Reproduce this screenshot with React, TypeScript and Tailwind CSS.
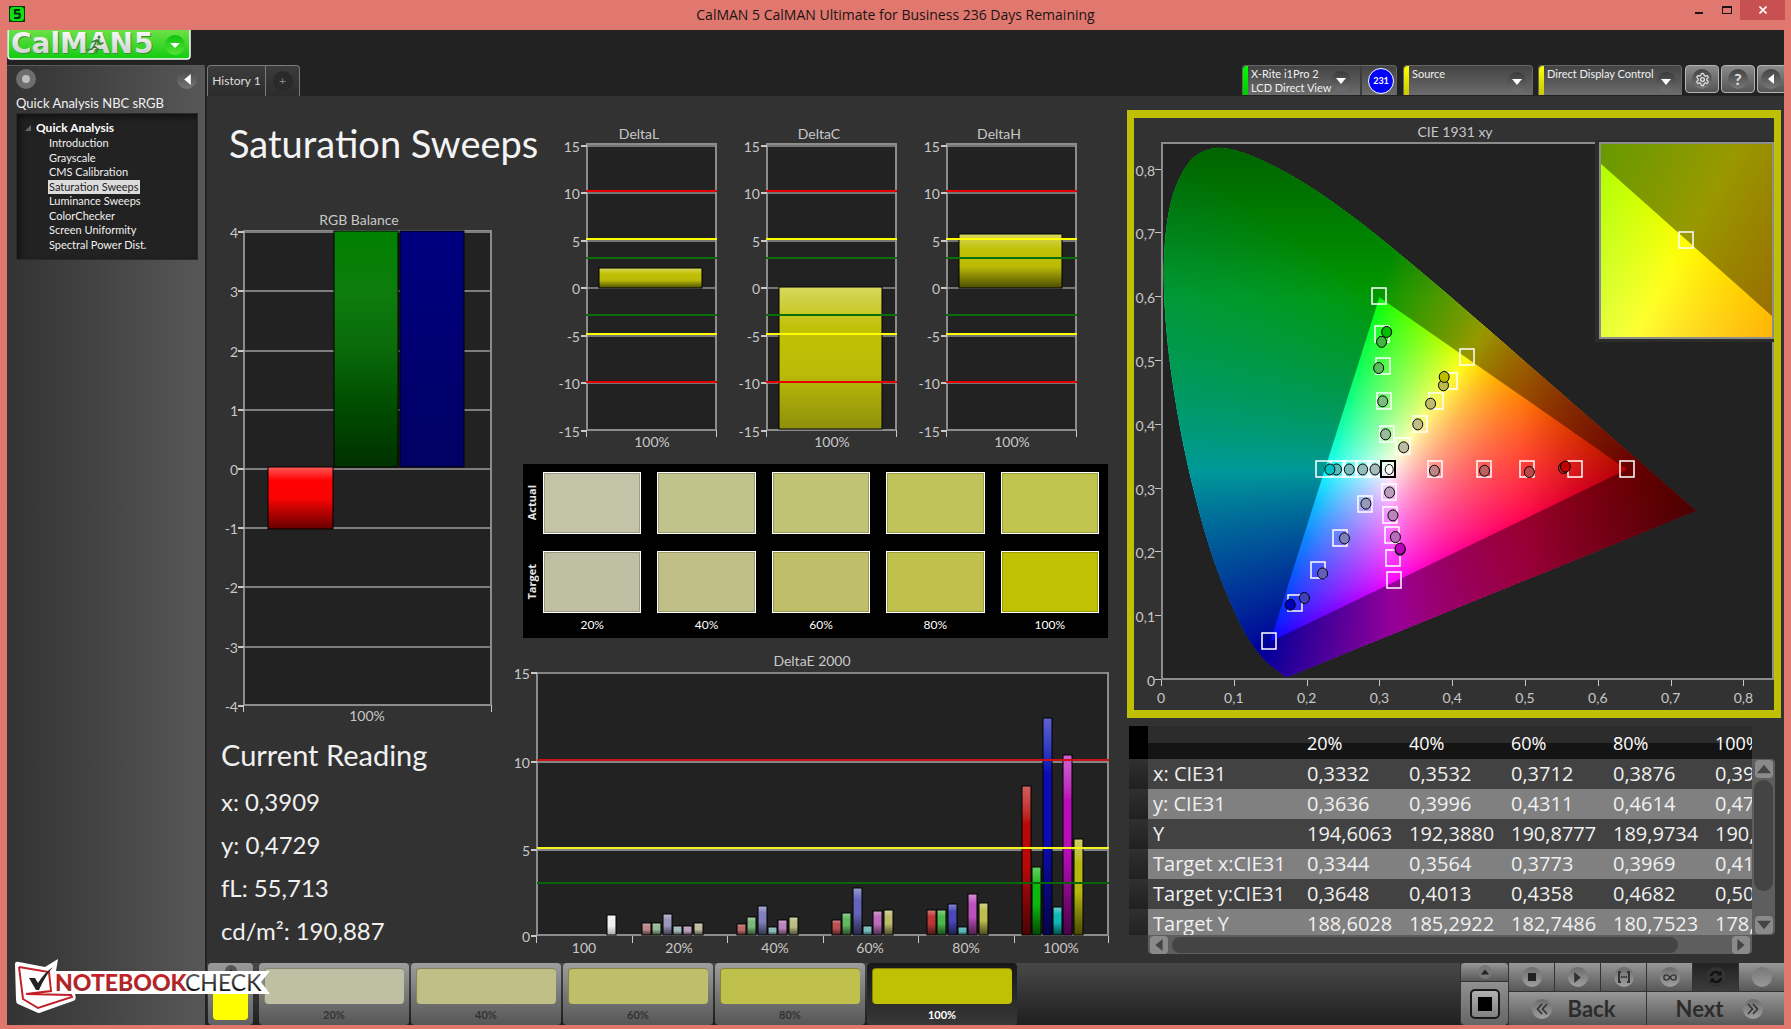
import React from "react";
import { LuSettings } from "react-icons/lu";

/* ---------- chromaticity maths ---------- */

const LOCUS: [number, number][] = [
  [0.1741, 0.005], [0.1714, 0.0051], [0.1644, 0.0109], [0.1566, 0.0177], [0.144, 0.0297],
  [0.1241, 0.0578], [0.1096, 0.0868], [0.0913, 0.1327], [0.0687, 0.2007], [0.0454, 0.295],
  [0.0235, 0.4127], [0.0082, 0.5384], [0.0039, 0.6548], [0.0139, 0.7502], [0.0389, 0.812],
  [0.0743, 0.8338], [0.1142, 0.8262], [0.1547, 0.8059], [0.1929, 0.7816], [0.2296, 0.7543],
  [0.2658, 0.7243], [0.3016, 0.6923], [0.3731, 0.6245], [0.4441, 0.5547], [0.5125, 0.4866],
  [0.5752, 0.4242], [0.627, 0.3725], [0.6658, 0.334], [0.6915, 0.3083], [0.719, 0.2809],
  [0.7347, 0.2653],
];

function xyColor(x: number, y: number): string {
  const z = 1 - x - y;
  const lin = [
    3.2406 * x - 1.5372 * y - 0.4986 * z,
    -0.9689 * x + 1.8758 * y + 0.0415 * z,
    0.0557 * x - 0.204 * y + 1.057 * z,
  ].map((c) => Math.max(0, c));
  const peak = Math.max(lin[0], lin[1], lin[2], 0.0001);
  const red = Math.min(1, Math.max(0.5, 1 - (x - 0.5) * 2.2));
  const green = Math.min(1, Math.max(0.6, 1 - (y - 0.6) * 1.5));
  const rgb = lin.map((c) => Math.round(255 * Math.pow(c / peak, 0.75) * red * green));
  return `rgb(${rgb[0]},${rgb[1]},${rgb[2]})`;
}

type FieldProps = {
  id: string; left: number; top: number; width: number; height: number;
  x0: number; x1: number; y0: number; y1: number; stops: number;
};

/* Colour field painted as thin horizontal gradient strips. */
function ColorField({ id, left, top, width, height, x0, x1, y0, y1, stops }: FieldProps) {
  const step = 2;
  const rows = Array.from({ length: Math.ceil(height / step) }, (_, i) => i);
  return (
    <g>
      <defs>
        {rows.map((r) => {
          const y = y1 - ((r * step + 1) / height) * (y1 - y0);
          return (
            <linearGradient key={r} id={`${id}-${r}`} x1="0" x2="1" y1="0" y2="0">
              {Array.from({ length: stops + 1 }, (_, s) => (
                <stop key={s} offset={s / stops} stopColor={xyColor(x0 + (s / stops) * (x1 - x0), y)} />
              ))}
            </linearGradient>
          );
        })}
      </defs>
      {rows.map((r) => (
        <rect key={r} x={left} y={top + r * step} width={width} height={Math.min(step + 1, height - r * step)} fill={`url(#${id}-${r})`} />
      ))}
    </g>
  );
}

/* ---------- shared chart parts ---------- */

const label = "fill-[#c8c8c8] text-[14px] font-['Lato',sans-serif]";

function shade(id: string, color: string, light = 0.35, dark = 0.6) {
  return (
    <linearGradient key={id} id={id} x1="0" x2="0" y1="0" y2="1">
      <stop offset="0" stopColor={`color-mix(in srgb, ${color}, white ${light * 100}%)`} />
      <stop offset="0.25" stopColor={color} />
      <stop offset="0.55" stopColor={color} />
      <stop offset="1" stopColor={`color-mix(in srgb, ${color}, black ${dark * 100}%)`} />
    </linearGradient>
  );
}

function RgbBalance() {
  const y = (v: number) => Math.round(261 - v * 59.2);
  return (
    <svg viewBox="0 0 308 522" className="w-full" role="img" aria-label="RGB Balance">
      <defs>
        <linearGradient id="rb-r" x1="0" x2="0" y1="0" y2="1">
          <stop offset="0" stopColor="#ff5a5a" /><stop offset="0.22" stopColor="#ff0000" />
          <stop offset="0.5" stopColor="#fc0404" /><stop offset="1" stopColor="#640000" />
        </linearGradient>
        <linearGradient id="rb-g" x1="0" x2="0" y1="0" y2="1">
          <stop offset="0" stopColor="#008000" /><stop offset="0.25" stopColor="#0d7d0d" />
          <stop offset="0.5" stopColor="#0a6a0a" /><stop offset="0.75" stopColor="#004c00" />
          <stop offset="1" stopColor="#003000" />
        </linearGradient>
        <linearGradient id="rb-b" x1="0" x2="0" y1="0" y2="1">
          <stop offset="0" stopColor="#000080" /><stop offset="1" stopColor="#000064" />
        </linearGradient>
      </defs>
      <text x="152" y="17" textAnchor="middle" className={label}>RGB Balance</text>
      <rect x="37" y="23" width="247" height="474" fill="#222" stroke="#8c8c8c" strokeWidth="2" />
      {[4, 3, 2, 1, 0, -1, -2, -3, -4].map((v) => (
        <g key={v}>
          <rect x="31" y={y(v) - 1} width="6" height="2" fill="#c8c8c8" />
          {v > -4 && <rect x="38" y={y(v) - 1} width="245" height="2" fill="#7d7d7d" />}
          <text x="31" y={y(v) + 6} textAnchor="end" className={label}>{v}</text>
        </g>
      ))}
      <rect x="61" y="259" width="65" height="62" fill="url(#rb-r)" stroke="#000" />
      <rect x="127" y="23" width="64" height="236" fill="url(#rb-g)" stroke="#000" />
      <rect x="193" y="23" width="64" height="236" fill="url(#rb-b)" stroke="#000" />
      <rect x="36" y="497" width="1" height="7" fill="#c8c8c8" />
      <rect x="284" y="497" width="1" height="7" fill="#c8c8c8" />
      <text x="160" y="513" textAnchor="middle" className={label}>100%</text>
    </svg>
  );
}

function DeltaChart({ name, top, bottom }: { name: string; top: number; bottom: number }) {
  const y = (v: number) => 163 - v * 9.5;
  const limits: [number, string][] = [[10.2, "#e60000"], [5.2, "#ffff00"], [3.2, "#0a6e0a"], [-2.8, "#0a6e0a"], [-4.8, "#ffff00"], [-9.9, "#e60000"]];
  return (
    <svg viewBox="0 0 180 330" className="w-full" role="img" aria-label={name}>
      <defs>
        <linearGradient id={`bar-${name}`} x1="0" x2="0" y1="0" y2="1">
          <stop offset="0" stopColor="#d7d75f" /><stop offset="0.3" stopColor="#c0c004" />
          <stop offset="0.6" stopColor="#bcbc08" />
          <stop offset="1" stopColor={bottom > 300 ? "#8f8f0c" : "#4b4b00"} />
        </linearGradient>
      </defs>
      <text x="94" y="14" textAnchor="middle" className={label}>{name}</text>
      <rect x="42" y="19" width="129" height="286" fill="#222" stroke="#8c8c8c" strokeWidth="2" />
      {[15, 10, 5, 0, -5, -10, -15].map((v) => (
        <g key={v}>
          <rect x="36" y={Math.round(y(v)) - 1} width="6" height="2" fill="#c8c8c8" />
          {v > -15 && <rect x="43" y={Math.round(y(v)) - 1} width="127" height="2" fill="#757575" />}
          <text x="35" y={y(v) + 6} textAnchor="end" className={label}>{v}</text>
        </g>
      ))}
      <rect x="54" y={top} width="103" height={bottom - top} fill={`url(#bar-${name})`} stroke="#000" />
      {limits.map(([v, c]) => (
        <rect key={v} x="41" y={Math.round(y(v)) - 1} width="131" height="2" fill={c} />
      ))}
      <rect x="41" y="305" width="1" height="7" fill="#c8c8c8" />
      <rect x="171" y="305" width="1" height="7" fill="#c8c8c8" />
      <text x="107" y="322" textAnchor="middle" className={label}>100%</text>
    </svg>
  );
}

const E_GROUPS: { name: string; bars: [number, string][] }[] = [
  { name: "20%", bars: [[272, "#bc8888"], [272, "#96b896"], [263, "#9898bc"], [275, "#a2baba"], [275, "#bca0bc"], [272, "#bcbc9c"]] },
  { name: "40%", bars: [[273, "#bc6a6a"], [266, "#7ab87a"], [255, "#8080bc"], [276, "#8cb8b8"], [269, "#bc84bc"], [266, "#bcbc84"]] },
  { name: "60%", bars: [[269, "#bc5050"], [262, "#60b860"], [237, "#6464b8"], [275, "#78bcbc"], [260, "#bc6cbc"], [259, "#bcbc6c"]] },
  { name: "80%", bars: [[259, "#bc3838"], [259, "#48b848"], [253, "#4848b8"], [276, "#5cb8b8"], [243, "#bc50bc"], [252, "#bcbc50"]] },
  { name: "100%", bars: [[135, "#b80808"], [216, "#0cb80c"], [67, "#0c0cb4"], [256, "#0cb8b8"], [104, "#b80cb8"], [188, "#b8b80c"]] },
];

function DeltaE() {
  return (
    <svg viewBox="0 0 605 307" className="w-full" role="img" aria-label="DeltaE 2000">
      <defs>
        {E_GROUPS.flatMap((g, gi) => g.bars.map(([, c], bi) => shade(`e-${gi}-${bi}`, c)))}
        {shade("e-white", "#f0f0f0", 0.3, 0.3)}
      </defs>
      <text x="297" y="16" textAnchor="middle" className={label}>DeltaE 2000</text>
      <rect x="22" y="23" width="571" height="262" fill="#222" stroke="#8c8c8c" strokeWidth="2" />
      {[[15, 22], [10, 111], [5, 199], [0, 285]].map(([v, y]) => (
        <g key={v}>
          <rect x="16" y={y} width="6" height="2" fill="#c8c8c8" />
          {v > 0 && <rect x="23" y={y} width="569" height="2" fill="#858585" />}
          <text x="15" y={y + 7} textAnchor="end" className={label}>{v}</text>
        </g>
      ))}
      <rect x="92" y="265" width="9" height="20" fill="url(#e-white)" stroke="#000" />
      {E_GROUPS.map((g, gi) =>
        g.bars.map(([top], bi) => (
          <rect key={`${gi}-${bi}`} x={127 + gi * 95 + Math.round(bi * 10.3)} y={top + 1} width="9" height={284 - top} fill={`url(#e-${gi}-${bi})`} stroke="#000" />
        )),
      )}
      <rect x="22" y="109" width="572" height="2" fill="#d01010" />
      <rect x="22" y="197" width="572" height="2" fill="#f4f41e" />
      <rect x="22" y="232" width="572" height="2" fill="#0a640a" />
      {[21, 117, 212, 308, 403, 499, 593].map((x) => (
        <rect key={x} x={x} y="286" width="1" height="7" fill="#c8c8c8" />
      ))}
      {["100", "20%", "40%", "60%", "80%", "100%"].map((t, i) => (
        <text key={t} x={69 + Math.round(i * 95.4)} y="303" textAnchor="middle" className={label}>{t}</text>
      ))}
    </svg>
  );
}

const TARGETS: [number, number][] = [
  [0.3, 0.602], [0.303, 0.543], [0.305, 0.4917], [0.306, 0.4368], [0.31, 0.385],
  [0.4197, 0.507], [0.397, 0.4687], [0.3773, 0.4368], [0.356, 0.402], [0.333, 0.366],
  [0.222, 0.33], [0.243, 0.33], [0.26, 0.33], [0.277, 0.33], [0.294, 0.33],
  [0.376, 0.33], [0.444, 0.33], [0.503, 0.33], [0.568, 0.33], [0.64, 0.33],
  [0.3127, 0.294], [0.315, 0.258], [0.3168, 0.2268], [0.3186, 0.192], [0.3203, 0.156],
  [0.28, 0.2764], [0.2463, 0.222], [0.2163, 0.172], [0.1846, 0.12], [0.149, 0.0606],
];

const READINGS: [number, number, string][] = [
  [0.303, 0.53, "#40b840"], [0.31, 0.5455, "#00be00"], [0.299, 0.489, "#5cbc5c"], [0.3045, 0.4368, "#7cbc7c"], [0.3085, 0.385, "#9abc9a"],
  [0.388, 0.4619, "#bcbc4c"], [0.389, 0.475, "#bebe00"], [0.3703, 0.4331, "#bcbc6a"], [0.3527, 0.4007, "#bebe86"], [0.3333, 0.3647, "#bcbca0"],
  [0.241, 0.33, "#56bcbc"], [0.232, 0.33, "#00c4c4"], [0.2586, 0.33, "#78bcbc"], [0.277, 0.33, "#90bcbc"], [0.294, 0.33, "#a4bcbc"],
  [0.3756, 0.328, "#bc8686"], [0.4444, 0.328, "#bc6060"], [0.506, 0.326, "#bc4848"], [0.553, 0.3323, "#bc3030"], [0.5555, 0.3344, "#c00000"],
  [0.314, 0.294, "#bc9cbc"], [0.3186, 0.258, "#bc84bc"], [0.322, 0.224, "#bc6cbc"], [0.3285, 0.204, "#bc48bc"], [0.3285, 0.206, "#be00be"],
  [0.2815, 0.2764, "#9898bc"], [0.252, 0.222, "#8080bc"], [0.222, 0.167, "#6060bc"], [0.197, 0.1285, "#4040bc"], [0.1775, 0.118, "#0000b4"],
];

function CieChart() {
  const px = (x: number) => 27 + x * 728;
  const py = (y: number) => 562 - y * 638;
  const n = LOCUS.length;
  const locus =
    `M${px(LOCUS[0][0])} ${py(LOCUS[0][1])}` +
    LOCUS.slice(0, n - 1)
      .map((p1, i) => {
        const p0 = LOCUS[Math.max(0, i - 1)];
        const p2 = LOCUS[i + 1];
        const p3 = LOCUS[Math.min(n - 1, i + 2)];
        return `C${px(p1[0] + (p2[0] - p0[0]) / 6)} ${py(p1[1] + (p2[1] - p0[1]) / 6)} ${px(p2[0] - (p3[0] - p1[0]) / 6)} ${py(p2[1] - (p3[1] - p1[1]) / 6)} ${px(p2[0])} ${py(p2[1])}`;
      })
      .join("") +
    "Z";
  const triangle = `M${px(0.3)} ${py(0.6)}L${px(0.64)} ${py(0.33)}L${px(0.15)} ${py(0.06)}Z`;
  return (
    <svg viewBox="0 0 640 592" className="block w-full" role="img" aria-label="CIE 1931 xy chromaticity diagram">
      <defs>
        <clipPath id="locus-clip"><path d={locus} /></clipPath>
      </defs>
      <text x="321" y="19" textAnchor="middle" className={label}>CIE 1931 xy</text>
      <rect x="28" y="25" width="611" height="536" fill="#222" stroke="#8c8c8c" strokeWidth="2" />
      <g clipPath="url(#locus-clip)">
        <ColorField id="cie" left={27} top={26} width={546} height={536} x0={0} x1={0.75} y0={0} y1={0.84} stops={50} />
        <path d={locus + triangle} fillRule="evenodd" fill="#000" fillOpacity="0.4" />
      </g>
      {TARGETS.map(([x, y], i) => (
        <rect key={i} x={Math.round(px(x)) - 7} y={Math.round(py(y)) - 8} width="14" height="16" fill="none" stroke="#fff" strokeWidth="1.5" />
      ))}
      <rect x={Math.round(px(0.3115)) - 7} y={Math.round(py(0.33)) - 8} width="14" height="16" fill="none" stroke="#000" strokeWidth="2" />
      <ellipse cx={px(0.3135)} cy={py(0.33)} rx="4" ry="5" fill="#fff" stroke="#000" />
      {READINGS.map(([x, y, c], i) => (
        <ellipse key={i} cx={px(x)} cy={py(y)} rx="5" ry="5.5" fill={c} stroke="#000" />
      ))}
      <rect x="461" y="22" width="179" height="202" fill="#2c2c2c" />
      <ColorField id="inset" left={466} top={25} width={173} height={195} x0={0.3843} x1={0.4543} y0={0.4703} y1={0.5403} stops={12} />
      <path d="M466 45V25H639V199Z" fill="#000" fillOpacity="0.4" />
      <rect x="466" y="25" width="173" height="195" fill="none" stroke="#8c8c8c" strokeWidth="2" />
      <rect x="545" y="114" width="14" height="16" fill="none" stroke="#fff" strokeWidth="1.5" />
      {[0, 1, 2, 3, 4, 5, 6, 7, 8].map((v) => (
        <g key={v}>
          <rect x="21" y={Math.round(py(v / 10)) - 1} width="6" height="1" fill="#c8c8c8" />
          <text x="21" y={py(v / 10) + 6} textAnchor="end" className={label}>{v ? `0,${v}` : "0"}</text>
          <rect x={Math.round(px(v / 10))} y="562" width="1" height="6" fill="#c8c8c8" />
          <text x={px(v / 10)} y="585" textAnchor="middle" className={label}>{v ? `0,${v}` : "0"}</text>
        </g>
      ))}
    </svg>
  );
}

/* ---------- small controls ---------- */

function Triangle({ dir, className }: { dir: "up" | "down" | "left" | "right"; className: string }) {
  const d = { up: "M0 8L5 2L10 8Z", down: "M0 2L5 8L10 2Z", left: "M8 0L2 5L8 10Z", right: "M2 0L8 5L2 10Z" }[dir];
  return <svg viewBox="0 0 10 10" className={className} aria-hidden="true"><path d={d} fill="currentColor" /></svg>;
}

function DropDisc() {
  return (
    <span className="pointer-events-none flex size-5 shrink-0 items-center justify-center rounded-full bg-linear-to-b from-[#3a3a3a] to-[#707070] text-white">
      <Triangle dir="down" className="size-[10px]" />
    </span>
  );
}

function Picker({ name, width }: { name: string; width: string }) {
  return (
    <label className={`relative flex h-[30px] ${width} items-center rounded-t border border-b-0 border-[#666] bg-linear-to-b from-[#444] to-[#6c6c6c]`}>
      <span className="absolute inset-y-0 left-0 w-[5px] rounded-tl bg-linear-to-b from-[#ffff00] to-[#c8c800]" />
      <select aria-label={name} className="h-full w-full appearance-none bg-transparent pb-[14px] pl-2 text-[11px] leading-4 text-[#f0f0f0]">
        <option>{name}</option>
      </select>
      <span className="absolute right-[5px] top-[6px]"><DropDisc /></span>
    </label>
  );
}

const squareButton = "flex h-7 w-[34px] shrink-0 items-center justify-center rounded border border-[#b4b4b4] bg-linear-to-b from-[#8a8a8a] to-[#555]";
const disc = "flex size-5 items-center justify-center rounded-full bg-linear-to-b from-[#444] to-[#777] text-[#e6e6e6]";

function Toolbar() {
  return (
    <div className="flex h-[31px] items-start bg-[#222]">
      <div role="tablist" className="flex h-[31px] w-[93px] overflow-hidden rounded-t border border-b-0 border-[#7a7a7a] bg-linear-to-b from-[#3c3c3c] to-[#2c2c2c]">
        <button role="tab" aria-selected="true" className="w-[58px] whitespace-nowrap border-r border-[#7a7a7a] text-[12px] text-[#dcdcdc]">History 1</button>
        <button aria-label="Add history" className="flex flex-1 items-center justify-center">
          <span className="flex size-5 items-center justify-center rounded-full bg-[#2a2a2a] text-[12px] text-[#888]">+</span>
        </button>
      </div>
      <div className="ml-auto flex items-start overflow-hidden">
        <div className="relative mr-[6px] flex h-[30px] w-[155px] rounded-t border border-b-0 border-[#666] bg-linear-to-b from-[#444] to-[#6c6c6c]">
          <span className="w-[5px] rounded-tl bg-linear-to-b from-[#00ff00] to-[#00c800]" />
          <button aria-haspopup="menu" className="flex w-[114px] items-center justify-between border-r-2 border-[#3c3c3c] pr-[9px] pl-[3px] text-left text-[11px] leading-[14px] text-[#f0f0f0]">
            <span className="whitespace-nowrap">X-Rite i1Pro 2<br />LCD Direct View</span>
            <DropDisc />
          </button>
          <button className="m-[2px] ml-[6px] flex size-[26px] items-center justify-center rounded-full border border-white bg-[#0000ff] text-[9px] font-bold text-white">231</button>
        </div>
        <div className="mr-[5px]"><Picker name="Source" width="w-[130px]" /></div>
        <div className="mr-[3px]"><Picker name="Direct Display Control" width="w-[144px]" /></div>
        <button aria-label="Settings" className={squareButton}><span className={disc}><LuSettings size={15} /></span></button>
        <button aria-label="Help" className={`${squareButton} ml-[2px]`}><span className={`${disc} text-[16px] font-bold`}>?</span></button>
        <button aria-label="Collapse" className="ml-[2px] flex h-7 w-[27px] items-center justify-center rounded-l border border-r-0 border-[#b4b4b4] bg-linear-to-b from-[#8a8a8a] to-[#555]">
          <span className={disc}><Triangle dir="left" className="size-[10px] text-white" /></span>
        </button>
      </div>
    </div>
  );
}

const STEPS = ["Introduction", "Grayscale", "CMS Calibration", "Saturation Sweeps", "Luminance Sweeps", "ColorChecker", "Screen Uniformity", "Spectral Power Dist."];

function Sidebar() {
  return (
    <aside className="w-[200px] shrink-0 rounded-tr border-t border-r-2 border-[#222] border-t-[#5a5a5a] bg-linear-to-r from-[#333] to-[#575757] pt-[3px] pr-2 pl-[9px]">
      <div className="flex items-center justify-between">
        <button aria-label="Options" className="flex size-5 items-center justify-center rounded-full bg-[#6e6e6e]"><span className="size-2 rounded-full bg-[#bebebe]" /></button>
        <button aria-label="Hide panel" className="flex size-5 items-center justify-center rounded-full bg-linear-to-b from-[#4a4a4a] to-[#757575] text-white"><Triangle dir="left" className="size-[11px]" /></button>
      </div>
      <h2 className="mt-[6px] text-[13px] leading-4 text-[#f0f0f0]">Quick Analysis NBC sRGB</h2>
      <nav className="mt-[2px] h-[147px] w-[182px] border border-[#2a2a2a] bg-[#222] pt-[5px] shadow-[inset_3px_3px_6px_#111]">
        <div className="flex h-[17px] items-center gap-[5px] pl-2 text-[12px] font-bold text-white">
          <svg viewBox="0 0 6 6" className="size-[6px]" aria-hidden="true"><path d="M6 0V6H0Z" fill="#666" /></svg>
          Quick Analysis
        </div>
        <ul className="grid h-[116px] grid-rows-8 pl-[31px] text-[11px] leading-[14px] text-[#f0f0f0]">
          {STEPS.map((s) => (
            <li key={s} className="flex items-center">
              <a href="#" className={s === "Saturation Sweeps" ? "bg-[#dcdcdc] px-px text-[#222]" : "px-px"}>{s}</a>
            </li>
          ))}
        </ul>
      </nav>
    </aside>
  );
}

const ACTUAL = ["bg-[#c3c3a8]", "bg-[#c0c38c]", "bg-[#c0c373]", "bg-[#c0c35a]", "bg-[#bfc54e]"];
const TARGET = ["bg-[#bfbfa4]", "bg-[#c0bf88]", "bg-[#bfbf6a]", "bg-[#c0c04c]", "bg-[#c0c004]"];
const LEVELS = ["20%", "40%", "60%", "80%", "100%"];

function SwatchRow({ name, colors }: { name: string; colors: string[] }) {
  return (
    <div className="flex h-[62px]">
      <div className="flex w-5 shrink-0 items-center justify-center pr-1">
        <span className="rotate-180 text-[11px] font-bold leading-none text-[#e6e6e6] [writing-mode:vertical-rl] font-['Open_Sans',sans-serif]">{name}</span>
      </div>
      <div className="grid flex-1 grid-cols-5 gap-4">
        {colors.map((c) => <div key={c} className={`border border-white shadow-[inset_0_0_0_1px_#00000030] ${c}`} />)}
      </div>
    </div>
  );
}

function Swatches() {
  return (
    <section className="mr-3 ml-2 bg-black pt-2 pr-[9px] pb-[5px]">
      <SwatchRow name="Actual" colors={ACTUAL} />
      <div className="h-[17px]" />
      <SwatchRow name="Target" colors={TARGET} />
      <div className="grid grid-cols-5 gap-4 pt-[3px] pl-5 text-center text-[12px] leading-[17px] text-white">
        {LEVELS.map((l) => <span key={l}>{l}</span>)}
      </div>
    </section>
  );
}

const ROWS = [
  ["x: CIE31", "0,3332", "0,3532", "0,3712", "0,3876", "0,3909"],
  ["y: CIE31", "0,3636", "0,3996", "0,4311", "0,4614", "0,4729"],
  ["Y", "194,6063", "192,3880", "190,8777", "189,9734", "190,8870"],
  ["Target x:CIE31", "0,3344", "0,3564", "0,3773", "0,3969", "0,4193"],
  ["Target y:CIE31", "0,3648", "0,4013", "0,4358", "0,4682", "0,5053"],
  ["Target Y", "188,6028", "185,2922", "182,7486", "180,7523", "178,9120"],
];

const scrollButton = "flex size-[18px] shrink-0 items-center justify-center rounded bg-[#8a8a8a] text-[#444]";

function DataTable() {
  return (
    <section className="mt-2 mr-[9px] ml-[9px]">
      <div className="flex">
        <div className="h-[209px] min-w-0 flex-1 overflow-hidden">
          <table className="w-[685px] table-fixed border-collapse text-left text-[20px] leading-[30px] text-[#f0f0f0] font-['Open_Sans',sans-serif]">
            <colgroup>
              <col className="w-[19px]" /><col className="w-[156px]" />
              {LEVELS.map((l) => <col key={l} className="w-[102px]" />)}
            </colgroup>
            <thead>
              <tr className="h-[33px] bg-linear-to-b from-[#2c2c2c] from-50% to-[#141414] to-50% text-[18px] text-white">
                <td className="bg-black" /><td />
                {LEVELS.map((l) => <th key={l} scope="col" className="pl-[3px] font-normal">{l}</th>)}
              </tr>
            </thead>
            <tbody>
              {ROWS.map((r) => (
                <tr key={r[0]} className="h-[30px] odd:bg-[#424242] even:bg-[#808080]">
                  <td className="bg-linear-to-b from-[#303030] to-[#202020]" />
                  <th scope="row" className="whitespace-nowrap pl-[5px] font-normal">{r[0]}</th>
                  {r.slice(1).map((v, i) => <td key={i} className="pl-[3px]">{v}</td>)}
                </tr>
              ))}
            </tbody>
          </table>
        </div>
        <div className="mt-[33px] flex w-[23px] flex-col items-center justify-between rounded-r bg-[#5e5e5e] py-[1px]">
          <button aria-label="Scroll up" className={scrollButton}><Triangle dir="up" className="size-[14px]" /></button>
          <div className="mb-[25px] mt-[2px] w-[19px] flex-1 rounded-full bg-[#444]" />
          <button aria-label="Scroll down" className={scrollButton}><Triangle dir="down" className="size-[14px]" /></button>
        </div>
      </div>
      <div className="mr-[23px] ml-[19px] flex h-[19px] items-center rounded-b bg-[#5e5e5e] px-[2px]">
        <button aria-label="Scroll left" className={scrollButton}><Triangle dir="left" className="size-3" /></button>
        <div className="mr-[54px] ml-1 h-4 flex-1 rounded-full bg-[#444]" />
        <button aria-label="Scroll right" className={scrollButton}><Triangle dir="right" className="size-3" /></button>
      </div>
    </section>
  );
}

const grayButton = "flex items-center justify-center bg-linear-to-b from-[#989898] to-[#585858]";
const roundSpot = "flex size-5 items-center justify-center rounded-full bg-linear-to-b from-[#6c6c6c] to-[#a0a0a0] text-[#333]";

function Footer() {
  return (
    <footer className="flex h-[62px] items-stretch bg-linear-to-b from-[#484848] to-[#202020]">
      <div className="ml-px flex w-[45px] shrink-0 flex-col items-center rounded bg-linear-to-b from-[#9a9a9a] to-[#606060] pb-[5px]">
        <span className="mt-[2px] flex size-3 items-center justify-center rounded-full bg-[#555] text-[#222]"><Triangle dir="up" className="size-[6px]" /></span>
        <span className="mt-[5px] w-[35px] flex-1 rounded-sm bg-[#ffff00]" />
      </div>
      <div className="ml-[6px] flex gap-[2px]">
        {LEVELS.map((l, i) => (
          <button
            key={l}
            className={
              i === 4
                ? "flex w-[150px] flex-col rounded bg-linear-to-b from-[#181818] to-[#383838] px-[5px] pt-[5px] text-[11px] font-bold text-white"
                : "flex w-[150px] flex-col rounded bg-linear-to-b from-[#9e9e9e] to-[#565656] px-[5px] pt-[5px] text-[11px] font-bold text-[#333]"
            }
          >
            <span className={`h-9 w-full rounded border-t border-l border-black/30 ${TARGET[i]}`} />
            <span className="w-full pt-[3px] text-center leading-4">{l}</span>
          </button>
        ))}
      </div>
      <div className="ml-auto flex w-[49px] shrink-0 flex-col border-x border-[#333]">
        <button aria-label="More" className={`${grayButton} h-[19px] rounded-t border-b border-[#333]`}><span className="flex size-[14px] items-center justify-center rounded-full bg-[#777] text-[#222]"><Triangle dir="up" className="size-2" /></span></button>
        <button aria-label="Stop pattern" className="flex flex-1 items-center justify-center rounded-b bg-linear-to-b from-[#909090] to-[#666]">
          <span className="flex size-[30px] items-center justify-center rounded-[5px] border-2 border-[#181818] bg-linear-to-b from-[#b0b0b0] to-[#808080]"><span className="size-[14px] bg-black" /></span>
        </button>
      </div>
      <div className="flex w-[275px] shrink-0 flex-col gap-px bg-[#333]">
        <div className="grid h-[30px] grid-cols-6 gap-px">
          <button aria-label="Stop" className={grayButton}><span className={roundSpot}><span className="size-2 bg-[#222]" /></span></button>
          <button aria-label="Play" className={grayButton}><span className={roundSpot}><Triangle dir="right" className="size-[11px]" /></span></button>
          <button aria-label="Read series" className={grayButton}>
            <span className={roundSpot}>
              <svg viewBox="0 0 14 12" className="h-3 w-[14px]" fill="none" stroke="currentColor" strokeWidth="2" aria-hidden="true"><path d="M4 1H2V11H4M10 1H12V11H10M4 6H5.5M6.3 6H7.8M8.6 6H10" /></svg>
            </span>
          </button>
          <button aria-label="Continuous" className={grayButton}>
            <span className={roundSpot}>
              <svg viewBox="0 0 16 8" className="h-[7px] w-[14px]" fill="none" stroke="currentColor" strokeWidth="1.6" aria-hidden="true"><path d="M8 4C6 1 5 1 4 1A3 3 0 0 0 4 7C5 7 6 7 8 4C10 1 11 1 12 1A3 3 0 0 1 12 7C11 7 10 7 8 4Z" /></svg>
            </span>
          </button>
          <button aria-label="Refresh" className="flex items-center justify-center bg-linear-to-b from-[#222] to-[#3c3c3c]">
            <span className="flex size-5 items-center justify-center rounded-full bg-[#333] text-[#111]">
              <svg viewBox="0 0 14 14" className="size-[14px]" fill="none" stroke="currentColor" strokeWidth="2.4" aria-hidden="true"><path d="M2 6A5 5 0 0 1 10.5 3.5M12 8A5 5 0 0 1 3.5 10.5" /><path d="M12.5 0.5V5.5H8ZM1.5 13.5V8.5H6Z" fill="currentColor" stroke="none" /></svg>
            </span>
          </button>
          <button aria-label="Record" className={grayButton}><span className="size-5 rounded-full bg-linear-to-b from-[#777] to-[#999]" /></button>
        </div>
        <div className="grid flex-1 grid-cols-2 gap-px text-[22px] font-bold text-[#2c2c2c]">
          <button className={`${grayButton} gap-4 pr-2`}>
            <span className={roundSpot}><svg viewBox="0 0 12 12" className="size-3" fill="none" stroke="currentColor" strokeWidth="1.6" aria-hidden="true"><path d="M6 1L1.5 6L6 11M11 1L6.5 6L11 11" /></svg></span>
            Back
          </button>
          <button className={`${grayButton} gap-5 pl-2`}>
            Next
            <span className={roundSpot}><svg viewBox="0 0 12 12" className="size-3" fill="none" stroke="currentColor" strokeWidth="1.6" aria-hidden="true"><path d="M1 1L5.5 6L1 11M6 1L10.5 6L6 11" /></svg></span>
          </button>
        </div>
      </div>
    </footer>
  );
}

function CalmanLogo() {
  return (
    <button aria-label="CalMAN 5 menu" className="h-[31px] w-[184px]">
      <svg viewBox="0 0 184 31" className="h-full w-full overflow-visible" aria-hidden="true">
        <defs>
          <linearGradient id="lg" x1="0" x2="0" y1="0" y2="1"><stop offset="0" stopColor="#6ee048" /><stop offset="1" stopColor="#10cc10" /></linearGradient>
          <linearGradient id="lt" x1="0" x2="0" y1="0" y2="1"><stop offset="0" stopColor="#fff" /><stop offset="1" stopColor="#c4c8c4" /></linearGradient>
          <linearGradient id="ld" x1="0" x2="0" y1="0" y2="1"><stop offset="0" stopColor="#0cc40c" /><stop offset="1" stopColor="#58e038" /></linearGradient>
        </defs>
        <path d="M1 0H183V26Q183 29 180 29H4Q1 29 1 26Z" fill="url(#lg)" />
        <path d="M183 0V26Q183 29 180 29H4Q1 29 1 26V0" fill="none" stroke="#fff" strokeWidth="1.5" />
        <g className="text-[28px] font-bold font-['DejaVu_Sans',sans-serif]">
          <text x="5" y="24" fill="#3c8c3c">CalMAN</text><text x="128" y="24" fill="#3c8c3c">5</text>
          <text x="4" y="23" fill="url(#lt)">CalMAN</text><text x="127" y="23" fill="url(#lt)">5</text>
        </g>
        <g stroke="#3a7a3a" strokeWidth="1.5" fill="none" strokeLinecap="round">
          <circle cx="92" cy="7" r="1.5" fill="#3a7a3a" stroke="none" />
          <path d="M90 10L87 16L91 19L89 23M87 16L85 19L80 20M85 12L90 10L93 14L96 13" />
        </g>
        <circle cx="168" cy="15" r="10" fill="url(#ld)" />
        <path d="M163 13H173L168 18Z" fill="#fff" />
      </svg>
    </button>
  );
}

function Watermark() {
  return (
    <svg viewBox="0 0 256 56" className="pointer-events-none absolute bottom-[15px] left-[14px] h-14 w-64" role="img" aria-label="NotebookCheck">
      <defs>
        <linearGradient id="wr" x1="0" x2="0" y1="0" y2="1"><stop offset="0" stopColor="#d81e24" /><stop offset="1" stopColor="#8c2c2c" /></linearGradient>
        <linearGradient id="wk" x1="0" x2="0" y1="0" y2="1"><stop offset="0" stopColor="#777" /><stop offset="1" stopColor="#000" /></linearGradient>
      </defs>
      <path d="M1 6Q1 3 5 4L31 9L44 1L42 13H256L247 24L256 36H61Q63 42 59 43L28 54Q25 56 22 54L4 46Q2 45 2 42Z" fill="#fff" />
      <path d="M5 9L35 14L37 33L12 36M5 9L9 41L24 50L58 39L57 37L12 36" fill="none" stroke="#c02026" strokeWidth="2" />
      <path d="M15 20H21L24 25Q30 15 39 9Q31 18 25 32H22Z" fill="#222" />
      <text x="41" y="33" fill="url(#wr)" className="text-[23px] font-black font-['Lato',sans-serif]">NOTEBOOK</text>
      <text x="171" y="33" fill="url(#wk)" className="text-[23px] font-['Lato',sans-serif]">CHECK</text>
    </svg>
  );
}

export default function App() {
  return (
    <div className="relative flex min-h-screen flex-col bg-[#e0786f] font-['Lato',sans-serif]">
      <header className="relative flex h-[30px] items-center justify-center pb-[2px]">
        <svg viewBox="0 0 16 16" className="absolute left-[9px] top-[6px] size-4" aria-hidden="true">
          <rect width="16" height="16" fill="#063c06" /><rect x="1" y="1" width="14" height="14" rx="3" fill="#12e012" />
          <path d="M11 4H6V7.5H9Q11 7.5 11 9.5Q11 12 8.5 12H5" fill="none" stroke="#031" strokeWidth="2.2" />
        </svg>
        <h1 className="text-[14px] text-[#1c1414] font-['Open_Sans',sans-serif]">CalMAN 5 CalMAN Ultimate for Business 236 Days Remaining</h1>
        <div className="absolute right-[6px] top-0 flex h-5">
          <button aria-label="Minimize" className="flex w-7 items-end justify-center pb-[6px]"><span className="h-[2px] w-2 bg-[#1c1414]" /></button>
          <button aria-label="Maximize" className="flex w-[27px] items-center justify-center"><span className="h-2 w-[10px] border border-t-2 border-[#1c1414]" /></button>
          <button aria-label="Close" className="flex w-[45px] items-center justify-center bg-[#c75050]">
            <svg viewBox="0 0 8 8" className="size-2" aria-hidden="true"><path d="M0.5 0.5L7.5 7.5M7.5 0.5L0.5 7.5" stroke="#fff" strokeWidth="1.6" /></svg>
          </button>
        </div>
      </header>
      <div className="mx-[7px] mb-1 flex flex-1 flex-col bg-[#222]">
        <div className="h-[35px]"><CalmanLogo /></div>
        <div className="flex flex-1">
          <Sidebar />
          <div className="flex min-w-0 flex-1 flex-col">
            <Toolbar />
            <main className="grid flex-1 grid-cols-[minmax(0,308fr)_minmax(0,605fr)_minmax(0,664fr)] items-start bg-[#323232]">
              <section className="pt-5">
                <h2 className="h-[92px] whitespace-nowrap pl-[22px] text-[38px] leading-[54px] text-[#f4f4f4]">Saturation Sweeps</h2>
                <RgbBalance />
                <div className="pt-1 pl-[14px] text-[#f0f0f0]">
                  <h3 className="text-[29px] leading-[42px]">Current Reading</h3>
                  <dl className="pt-1 text-[24px] leading-[43px]">
                    {[["x:", "0,3909"], ["y:", "0,4729"], ["fL:", "55,713"], ["cd/m²:", "190,887"]].map(([k, v]) => (
                      <div key={k} className="flex gap-[6px]"><dt>{k}</dt><dd>{v}</dd></div>
                    ))}
                  </dl>
                </div>
              </section>
              <section>
                <div className="grid grid-cols-3 pt-[29px] pr-[35px] pl-[30px]">
                  <DeltaChart name="DeltaL" top={143} bottom={163} />
                  <DeltaChart name="DeltaC" top={162} bottom={304} />
                  <DeltaChart name="DeltaH" top={109} bottom={163} />
                </div>
                <div className="pt-[9px] pb-[12px]"><Swatches /></div>
                <DeltaE />
              </section>
              <section className="pt-[14px]">
                <div className="mr-[3px] ml-[7px] border-x-[7px] border-y-8 border-[#bfbf04]"><CieChart /></div>
                <DataTable />
              </section>
            </main>
            <Footer />
          </div>
        </div>
      </div>
      <Watermark />
    </div>
  );
}
